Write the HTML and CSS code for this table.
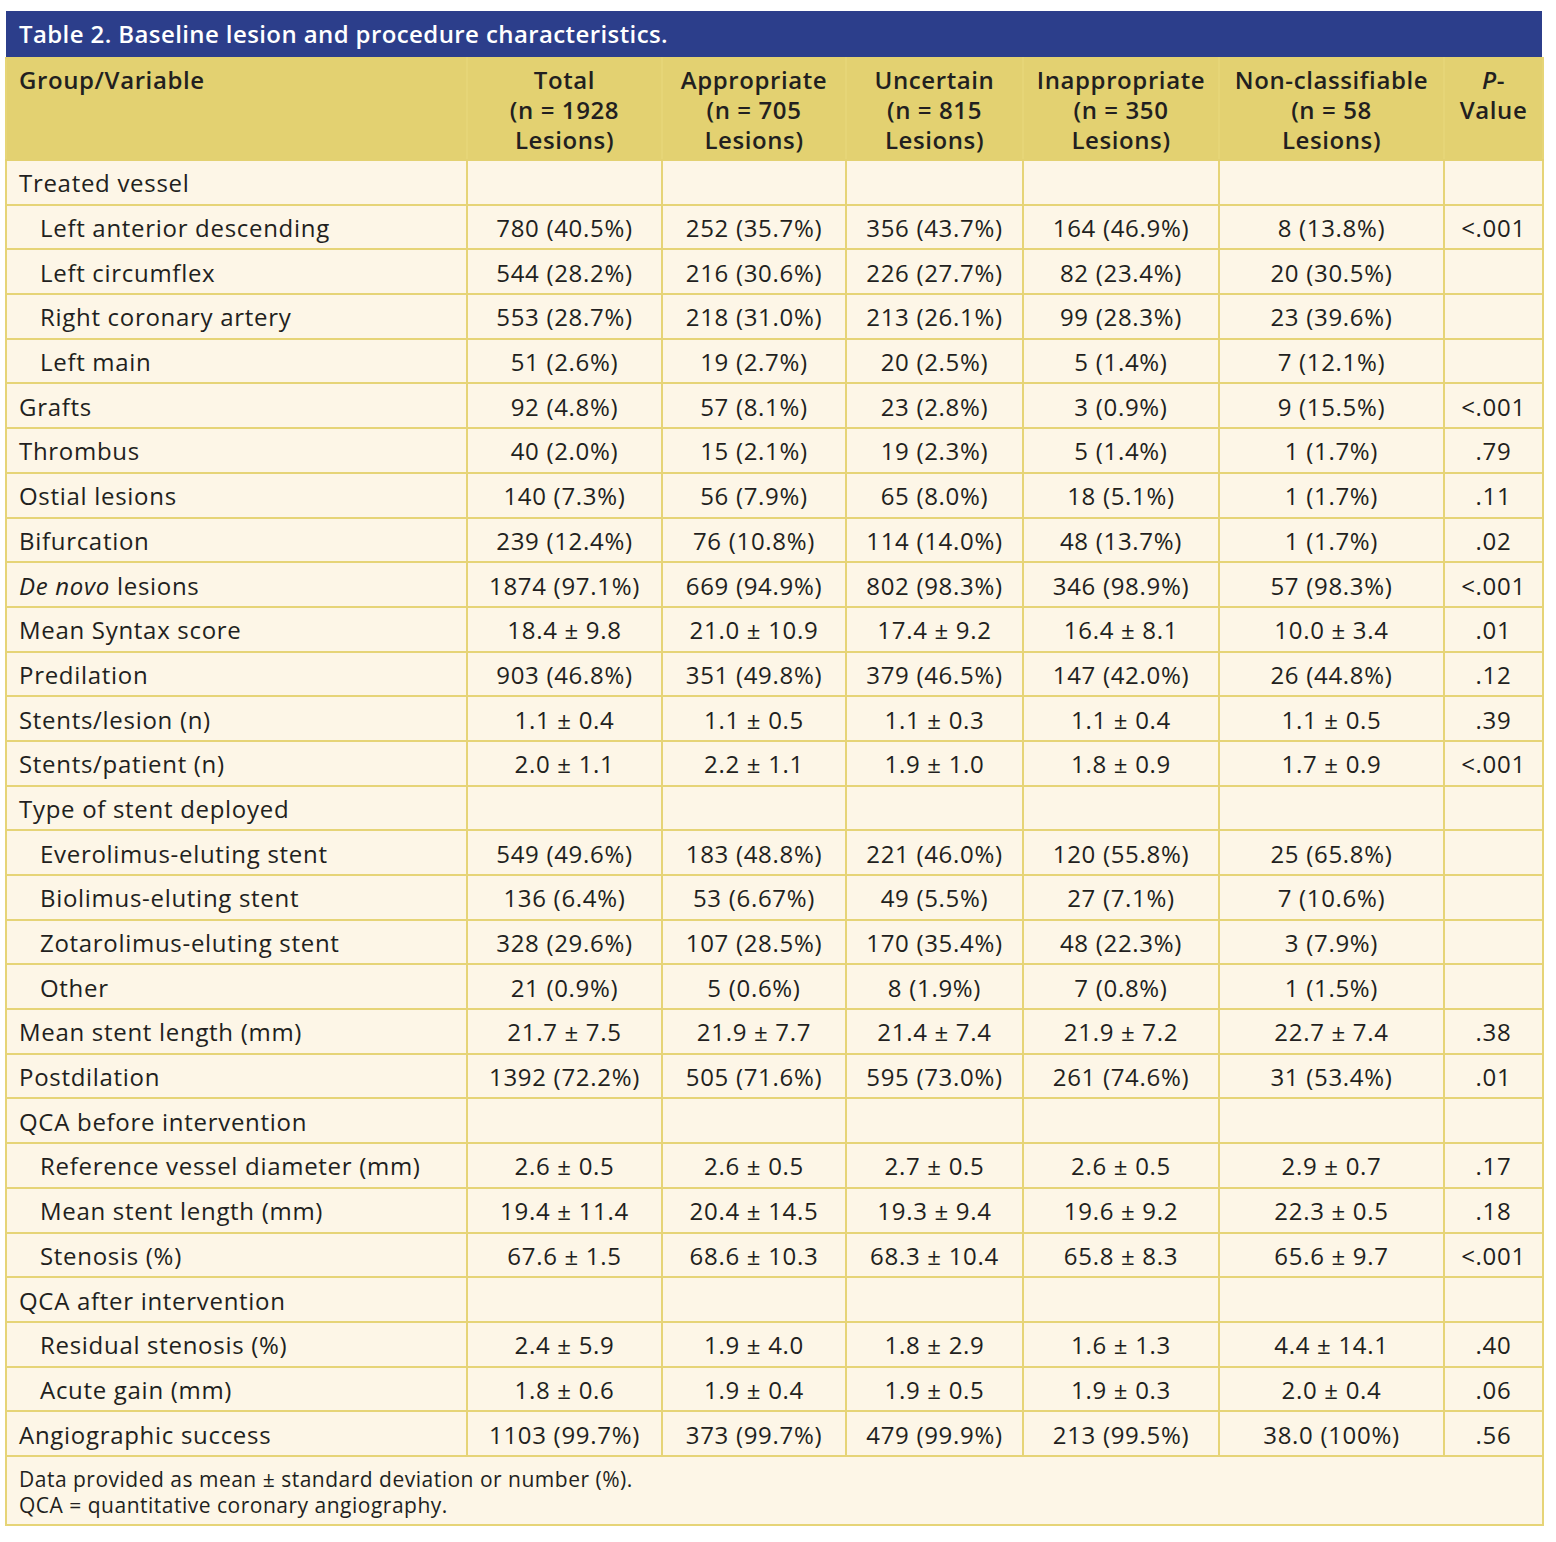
FILE: index.html
```html
<!DOCTYPE html>
<html>
<head>
<meta charset="utf-8">
<link rel="stylesheet" href="styles.css">
</head>
<body>
<div class="wrap">
  <div class="title">Table 2. Baseline lesion and procedure characteristics.</div>
  <table class="tbl">
    <colgroup>
      <col class="c1"><col class="c2"><col class="c3"><col class="c4"><col class="c5"><col class="c6"><col class="c7">
    </colgroup>
    <thead>
      <tr>
        <th class="lh">Group/Variable</th>
        <th>Total<br>(n = 1928<br>Lesions)</th>
        <th>Appropriate<br>(n = 705<br>Lesions)</th>
        <th>Uncertain<br>(n = 815<br>Lesions)</th>
        <th>Inappropriate<br>(n = 350<br>Lesions)</th>
        <th>Non-classifiable<br>(n = 58<br>Lesions)</th>
        <th><i>P</i>-<br>Value</th>
      </tr>
    </thead>
    <tbody>
      <tr><td>Treated vessel</td><td></td><td></td><td></td><td></td><td></td><td></td></tr>
      <tr><td class="in">Left anterior descending</td><td>780 (40.5%)</td><td>252 (35.7%)</td><td>356 (43.7%)</td><td>164 (46.9%)</td><td>8 (13.8%)</td><td>&lt;.001</td></tr>
      <tr><td class="in">Left circumflex</td><td>544 (28.2%)</td><td>216 (30.6%)</td><td>226 (27.7%)</td><td>82 (23.4%)</td><td>20 (30.5%)</td><td></td></tr>
      <tr><td class="in">Right coronary artery</td><td>553 (28.7%)</td><td>218 (31.0%)</td><td>213 (26.1%)</td><td>99 (28.3%)</td><td>23 (39.6%)</td><td></td></tr>
      <tr><td class="in">Left main</td><td>51 (2.6%)</td><td>19 (2.7%)</td><td>20 (2.5%)</td><td>5 (1.4%)</td><td>7 (12.1%)</td><td></td></tr>
      <tr><td>Grafts</td><td>92 (4.8%)</td><td>57 (8.1%)</td><td>23 (2.8%)</td><td>3 (0.9%)</td><td>9 (15.5%)</td><td>&lt;.001</td></tr>
      <tr><td>Thrombus</td><td>40 (2.0%)</td><td>15 (2.1%)</td><td>19 (2.3%)</td><td>5 (1.4%)</td><td>1 (1.7%)</td><td>.79</td></tr>
      <tr><td>Ostial lesions</td><td>140 (7.3%)</td><td>56 (7.9%)</td><td>65 (8.0%)</td><td>18 (5.1%)</td><td>1 (1.7%)</td><td>.11</td></tr>
      <tr><td>Bifurcation</td><td>239 (12.4%)</td><td>76 (10.8%)</td><td>114 (14.0%)</td><td>48 (13.7%)</td><td>1 (1.7%)</td><td>.02</td></tr>
      <tr><td><i>De novo</i> lesions</td><td>1874 (97.1%)</td><td>669 (94.9%)</td><td>802 (98.3%)</td><td>346 (98.9%)</td><td>57 (98.3%)</td><td>&lt;.001</td></tr>
      <tr><td>Mean Syntax score</td><td>18.4 ± 9.8</td><td>21.0 ± 10.9</td><td>17.4 ± 9.2</td><td>16.4 ± 8.1</td><td>10.0 ± 3.4</td><td>.01</td></tr>
      <tr><td>Predilation</td><td>903 (46.8%)</td><td>351 (49.8%)</td><td>379 (46.5%)</td><td>147 (42.0%)</td><td>26 (44.8%)</td><td>.12</td></tr>
      <tr><td>Stents/lesion (n)</td><td>1.1 ± 0.4</td><td>1.1 ± 0.5</td><td>1.1 ± 0.3</td><td>1.1 ± 0.4</td><td>1.1 ± 0.5</td><td>.39</td></tr>
      <tr><td>Stents/patient (n)</td><td>2.0 ± 1.1</td><td>2.2 ± 1.1</td><td>1.9 ± 1.0</td><td>1.8 ± 0.9</td><td>1.7 ± 0.9</td><td>&lt;.001</td></tr>
      <tr><td>Type of stent deployed</td><td></td><td></td><td></td><td></td><td></td><td></td></tr>
      <tr><td class="in">Everolimus-eluting stent</td><td>549 (49.6%)</td><td>183 (48.8%)</td><td>221 (46.0%)</td><td>120 (55.8%)</td><td>25 (65.8%)</td><td></td></tr>
      <tr><td class="in">Biolimus-eluting stent</td><td>136 (6.4%)</td><td>53 (6.67%)</td><td>49 (5.5%)</td><td>27 (7.1%)</td><td>7 (10.6%)</td><td></td></tr>
      <tr><td class="in">Zotarolimus-eluting stent</td><td>328 (29.6%)</td><td>107 (28.5%)</td><td>170 (35.4%)</td><td>48 (22.3%)</td><td>3 (7.9%)</td><td></td></tr>
      <tr><td class="in">Other</td><td>21 (0.9%)</td><td>5 (0.6%)</td><td>8 (1.9%)</td><td>7 (0.8%)</td><td>1 (1.5%)</td><td></td></tr>
      <tr><td>Mean stent length (mm)</td><td>21.7 ± 7.5</td><td>21.9 ± 7.7</td><td>21.4 ± 7.4</td><td>21.9 ± 7.2</td><td>22.7 ± 7.4</td><td>.38</td></tr>
      <tr><td>Postdilation</td><td>1392 (72.2%)</td><td>505 (71.6%)</td><td>595 (73.0%)</td><td>261 (74.6%)</td><td>31 (53.4%)</td><td>.01</td></tr>
      <tr><td>QCA before intervention</td><td></td><td></td><td></td><td></td><td></td><td></td></tr>
      <tr><td class="in">Reference vessel diameter (mm)</td><td>2.6 ± 0.5</td><td>2.6 ± 0.5</td><td>2.7 ± 0.5</td><td>2.6 ± 0.5</td><td>2.9 ± 0.7</td><td>.17</td></tr>
      <tr><td class="in">Mean stent length (mm)</td><td>19.4 ± 11.4</td><td>20.4 ± 14.5</td><td>19.3 ± 9.4</td><td>19.6 ± 9.2</td><td>22.3 ± 0.5</td><td>.18</td></tr>
      <tr><td class="in">Stenosis (%)</td><td>67.6 ± 1.5</td><td>68.6 ± 10.3</td><td>68.3 ± 10.4</td><td>65.8 ± 8.3</td><td>65.6 ± 9.7</td><td>&lt;.001</td></tr>
      <tr><td>QCA after intervention</td><td></td><td></td><td></td><td></td><td></td><td></td></tr>
      <tr><td class="in">Residual stenosis (%)</td><td>2.4 ± 5.9</td><td>1.9 ± 4.0</td><td>1.8 ± 2.9</td><td>1.6 ± 1.3</td><td>4.4 ± 14.1</td><td>.40</td></tr>
      <tr><td class="in">Acute gain (mm)</td><td>1.8 ± 0.6</td><td>1.9 ± 0.4</td><td>1.9 ± 0.5</td><td>1.9 ± 0.3</td><td>2.0 ± 0.4</td><td>.06</td></tr>
      <tr><td>Angiographic success</td><td>1103 (99.7%)</td><td>373 (99.7%)</td><td>479 (99.9%)</td><td>213 (99.5%)</td><td>38.0 (100%)</td><td>.56</td></tr>
    </tbody>
    <tfoot>
      <tr><td colspan="7" class="foot">Data provided as mean ± standard deviation or number (%).<br>QCA = quantitative coronary angiography.</td></tr>
    </tfoot>
  </table>
</div>
</body>
</html>
```
FILE: styles.css
```css
html, body {
  margin: 0;
  padding: 0;
  background: #ffffff;
}
body {
  font-family: "Open Sans", "Noto Sans", sans-serif;
  color: #221f20;
}
.wrap {
  margin: 11px 0 0 5px;
  width: 1537px;
}
.title {
  background: #2c3e8b;
  color: #ffffff;
  font-size: 24px;
  font-weight: 600;
  letter-spacing: 0.4px;
  line-height: 46px;
  height: 46px;
  padding-left: 13px;
  margin-left: 1px;
}
.tbl {
  width: 1537px;
  border-collapse: collapse;
  table-layout: fixed;
  background: #fdf6e7;
  font-size: 24px;
  letter-spacing: 0.7px;
}
.c1 { width: 461px; }
.c2 { width: 195px; }
.c3 { width: 184px; }
.c4 { width: 177px; }
.c5 { width: 196px; }
.c6 { width: 225px; }
.c7 { width: 99px; }
.tbl th {
  background: #e3d171;
  font-weight: 600;
  letter-spacing: 0.6px;
  line-height: 30px;
  padding: 6px 0 4px;
  text-align: center;
  vertical-align: top;
  border: 2px solid #e3d171;
  border-left-color: #e6d577;
  border-right-color: #e6d577;
}
.tbl th.lh {
  text-align: left;
  padding-left: 12px;
}
.tbl td {
  border: 2px solid #e6d477;
  height: 40.7px;
  padding: 2px 0 0;
  text-align: center;
  vertical-align: middle;
  line-height: 28px;
  white-space: nowrap;
}
.tbl td:first-child {
  text-align: left;
  padding-left: 12px;
}
.tbl td.in {
  padding-left: 33px;
}
.tbl td.foot {
  text-align: left;
  height: auto;
  font-size: 21px;
  letter-spacing: 0.5px;
  line-height: 26px;
  padding: 9px 12px 6px;
}
```
